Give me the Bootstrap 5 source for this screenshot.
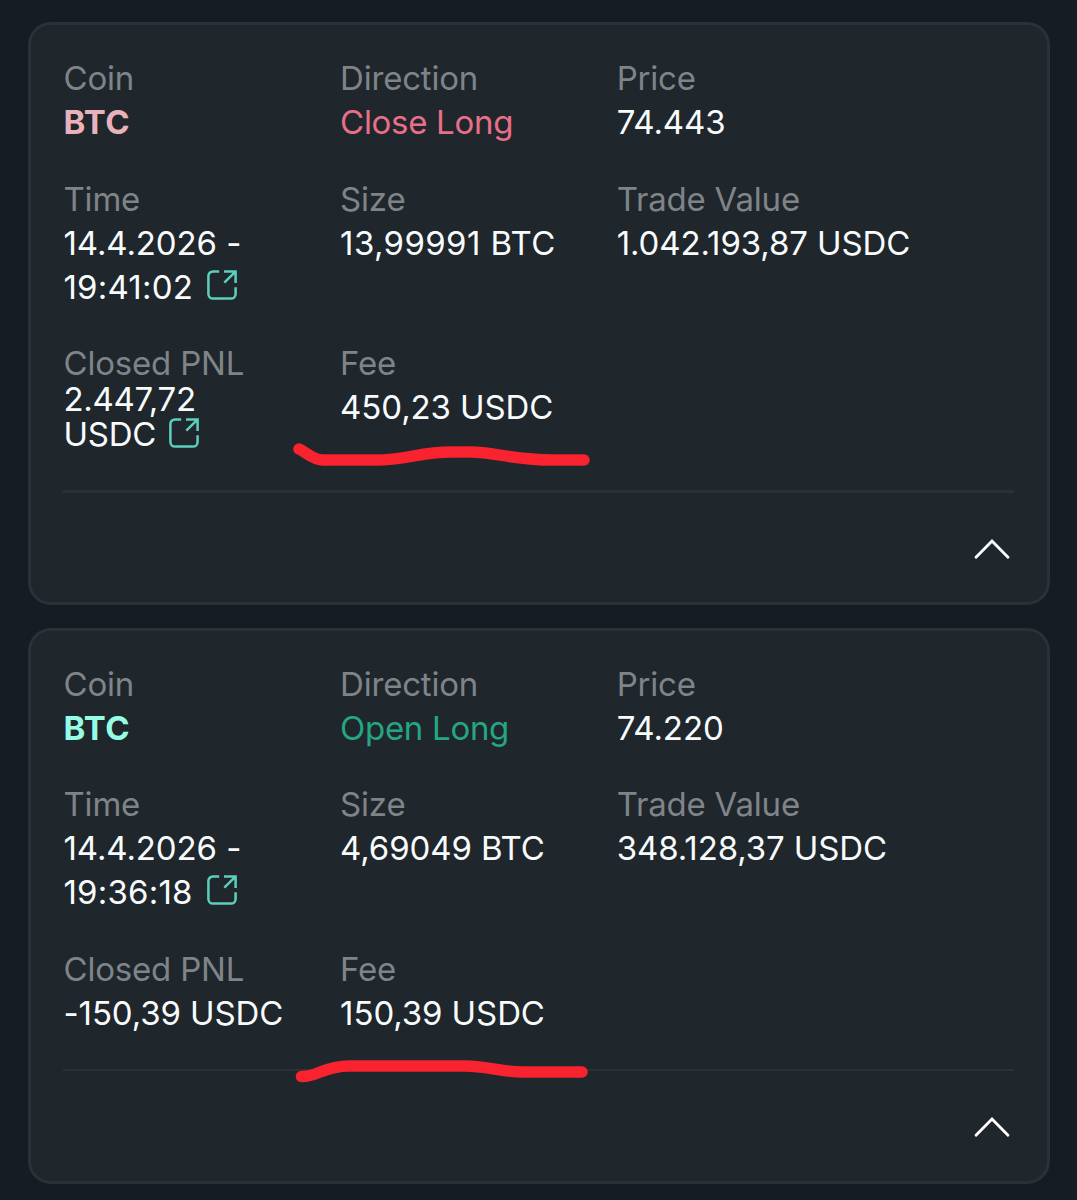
<!DOCTYPE html>
<html lang="en">
<head>
<meta charset="utf-8">
<meta name="viewport" content="width=device-width, initial-scale=1">
<title>Trade history</title>
<link href="https://cdn.jsdelivr.net/npm/bootstrap@5.3.0/dist/css/bootstrap.min.css" rel="stylesheet">
<style>
  body { background: #151c23; color: #f8fbfc; font-family: Inter, "Liberation Sans", sans-serif; font-size: 33px; line-height: 44px; font-weight: 400; letter-spacing: -.1px; overflow: hidden; }
  .trades { padding: 22px 27px 0 28px; gap: 23px; }
  .trade { background: #1f262c; border: 3px solid #2a3137; border-radius: 23px; padding: 31px 33px 0 32.5px; }
  .trade-first { height: 583px; }
  .trade-second { height: 556px; padding-top: 30.5px; }
  .fields { row-gap: 32.6px; margin-right: -4px; }
  .field-cell { flex: 0 0 276.6px; white-space: nowrap; }
  .field-cell:nth-child(3n) { flex-basis: 396px; }
  .field-name { color: #7f8489; letter-spacing: -.2px; }
  .tight { line-height: 35.5px; margin-top: -3.5px; letter-spacing: -.3px; }
  .coin-short { color: #e9b2bb; letter-spacing: .4px; }
  .coin-long { color: #97fce4; letter-spacing: .4px; }
  .dir-short { color: #e96f89; letter-spacing: -.3px; }
  .dir-long { color: #25a682; letter-spacing: -.3px; }
  .clock { letter-spacing: .2px; width: 128px; }
  .size-wide { letter-spacing: .38px; }
  .out-icon { width: 30px; height: 30px; margin: 5px 0 0 15px; color: #5dd0bd; }
  .tight .out-icon { margin: 1px 0 0 13px; }
  .trade-foot { border-top: 3px solid #2a3137; height: 112px; margin-left: -1px; }
  .trade-second .trade-foot { border-top-width: 2px; }
  .toggle-btn { margin: 45px 4px 0 0; width: 36px; height: 22px; line-height: 0; }
  .marker { left: -31px; top: -3px; width: 1077px; height: 583px; pointer-events: none; }
</style>
</head>
<body>
<svg class="d-none">
  <symbol id="external" viewBox="0 0 30 30"><path d="M12.2 1.4H6A4.6 4.6 0 0 0 1.400 6V24A4.600 4.600 0 0 0 6 28.600h18a4.600 4.600 0 0 0 4.600-4.600v-6.700M17 1.400h11.600v11.600M28.200 1.800 17.300 12.700" fill="none" stroke="currentColor" stroke-width="2.5"/></symbol>
  <symbol id="chevron" viewBox="0 0 36 22"><path d="M2 19.2 18 3l16 16.2" fill="none" stroke="currentColor" stroke-width="2.8" stroke-linecap="round"/></symbol>
</svg>
<main class="trades d-flex flex-column">
  <article class="trade trade-first position-relative d-flex flex-column justify-content-between">
    <div class="fields d-flex flex-wrap">
      <div class="field-cell"><div class="field-name">Coin</div><div class="coin-short fw-bold">BTC</div></div>
      <div class="field-cell"><div class="field-name">Direction</div><div class="dir-short">Close Long</div></div>
      <div class="field-cell"><div class="field-name">Price</div><div>74.443</div></div>
      <div class="field-cell"><div class="field-name">Time</div><div>14.4.2026 -</div><div class="d-flex"><span class="clock">19:41:02</span><svg class="out-icon"><use href="#external"/></svg></div></div>
      <div class="field-cell"><div class="field-name">Size</div><div class="size-wide">13,99991 BTC</div></div>
      <div class="field-cell"><div class="field-name">Trade Value</div><div>1.042.193,87 USDC</div></div>
      <div class="field-cell"><div class="field-name">Closed PNL</div><div class="tight"><div>2.447,72</div><div class="d-flex"><span>USDC</span><svg class="out-icon"><use href="#external"/></svg></div></div></div>
      <div class="field-cell"><div class="field-name">Fee</div><div>450,23 USDC</div></div>
    </div>
    <div class="trade-foot d-flex justify-content-end"><button class="toggle-btn btn border-0 p-0 text-white" aria-label="Collapse"><svg width="36" height="22"><use href="#chevron"/></svg></button></div>
    <svg class="marker position-absolute" viewBox="0 22 1077 583"><path d="M299 449C306 452 313 460 323 460H371C405 461 418 452 451 452H471C493 452 514 460 553 460H584" fill="none" stroke="#f8232e" stroke-width="11.5" stroke-linecap="round"/></svg>
  </article>
  <article class="trade trade-second position-relative d-flex flex-column justify-content-between">
    <div class="fields d-flex flex-wrap">
      <div class="field-cell"><div class="field-name">Coin</div><div class="coin-long fw-bold">BTC</div></div>
      <div class="field-cell"><div class="field-name">Direction</div><div class="dir-long">Open Long</div></div>
      <div class="field-cell"><div class="field-name">Price</div><div>74.220</div></div>
      <div class="field-cell"><div class="field-name">Time</div><div>14.4.2026 -</div><div class="d-flex"><span class="clock">19:36:18</span><svg class="out-icon"><use href="#external"/></svg></div></div>
      <div class="field-cell"><div class="field-name">Size</div><div>4,69049 BTC</div></div>
      <div class="field-cell"><div class="field-name">Trade Value</div><div>348.128,37 USDC</div></div>
      <div class="field-cell"><div class="field-name">Closed PNL</div><div>-150,39 USDC</div></div>
      <div class="field-cell"><div class="field-name">Fee</div><div>150,39 USDC</div></div>
    </div>
    <div class="trade-foot d-flex justify-content-end"><button class="toggle-btn btn border-0 p-0 text-white" aria-label="Collapse"><svg width="36" height="22"><use href="#chevron"/></svg></button></div>
    <svg class="marker position-absolute" viewBox="0 628 1077 583"><path d="M301.500 1076.500C317 1077 324 1066 349 1066H465C486 1066 501 1072 523 1072H582" fill="none" stroke="#f8232e" stroke-width="11.500" stroke-linecap="round"/></svg>
  </article>
</main>
<script src="https://cdn.jsdelivr.net/npm/bootstrap@5.3.0/dist/js/bootstrap.bundle.min.js"></script>
</body>
</html>
